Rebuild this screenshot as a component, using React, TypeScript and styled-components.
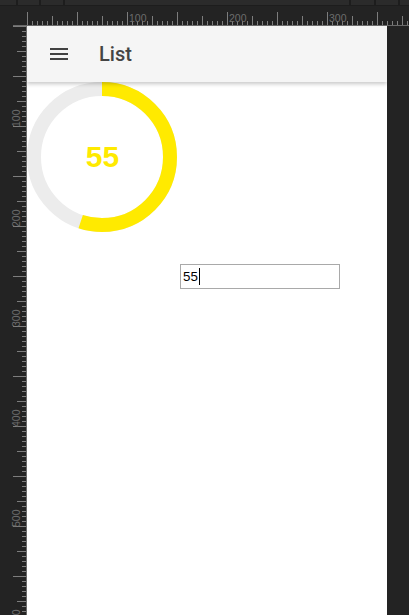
import React from "react";
import styled, { createGlobalStyle } from "styled-components";

const GlobalStyle = createGlobalStyle`
  html, body { margin: 0; padding: 0; background: #232323; overflow: hidden; }
  body { font-family: "Liberation Sans", Arial, sans-serif; }
`;

const Frame = styled.div`
  display: grid;
  grid-template-columns: 27px 360px 22px;
  grid-template-rows: 6px 20px 589px;
  width: 409px;
  height: 615px;
  background: #232323;
  overflow: hidden;
`;

const TopStrip = styled.div`
  grid-column: 1 / -1;
  display: flex;
  gap: 2px;
  background: #1d1d1d;
  padding-bottom: 1px;
`;

const StripSegment = styled.div<{ $w: number }>`
  flex: 0 0 ${(p) => p.$w}px;
  background: #2b2b2b;
`;

const TopRulerBox = styled.div`
  grid-column: 1 / -1;
  display: block;
  line-height: 0;
`;

const LeftRulerBox = styled.div`
  line-height: 0;
`;

const RightGutter = styled.div`
  background: #232323;
`;

const Page = styled.div`
  display: flex;
  flex-direction: column;
  background: #ffffff;
  overflow: hidden;
`;

const AppBar = styled.header`
  flex: 0 0 56px;
  display: flex;
  align-items: center;
  gap: 28px;
  padding-left: 20px;
  background: #f5f5f5;
  box-shadow: 0 2px 4px rgba(0, 0, 0, 0.22);
  position: relative;
  z-index: 1;
`;

const MenuIcon = styled.svg`
  width: 24px;
  height: 24px;
  fill: #424242;
  display: block;
`;

const Title = styled.h1`
  margin: 0;
  font-family: Roboto, "Liberation Sans", sans-serif;
  font-size: 20px;
  font-weight: 500;
  color: #444444;
  line-height: 24px;
`;

const Content = styled.main`
  display: flex;
  align-items: flex-start;
  gap: 3px;
`;

const ChartSvg = styled.svg`
  display: block;
  width: 150px;
  height: 150px;
  flex: 0 0 150px;
`;

const InputWrap = styled.div`
  position: relative;
  margin-top: 182px;
  width: 160px;
  height: 25px;
`;

const ValueInput = styled.input`
  box-sizing: border-box;
  display: block;
  width: 160px;
  height: 25px;
  margin: 0;
  padding: 1px 2px;
  border: 1px solid #a9a9a9;
  border-radius: 0;
  font-family: "Liberation Sans", Arial, sans-serif;
  font-size: 13.33px;
  color: #000;
  caret-color: transparent;
  outline: none;
  background: #fff;
`;

const Caret = styled.span`
  position: absolute;
  left: 18px;
  top: 4px;
  width: 1px;
  height: 17px;
  background: #000;
  pointer-events: none;
`;

const TICK = "#7d7d7d";
const LABEL = "#6c6c6c";

function TopRuler() {
  const ticks: React.ReactNode[] = [];
  const labels: React.ReactNode[] = [];
  for (let v = 0; 27 + v < 409; v += 5) {
    const x = 27 + v;
    const len = v % 50 === 0 ? 13 : v % 25 === 0 ? 9 : 4;
    ticks.push(<rect key={v} x={x} y={19 - len} width={1} height={len} fill={TICK} />);
    if (v % 100 === 0 && v > 0) {
      labels.push(
        <text key={"l" + v} x={x + 2} y={16} fontSize={10.5} fill={LABEL} fontFamily="Liberation Sans, Arial, sans-serif">
          {v}
        </text>
      );
    }
  }
  return (
    <svg width={409} height={20} viewBox="0 0 409 20">
      <rect x={13} y={19} width={396} height={1} fill="#6a6a6a" />
      {ticks}
      {labels}
    </svg>
  );
}

function LeftRuler() {
  const ticks: React.ReactNode[] = [];
  const labels: React.ReactNode[] = [];
  for (let v = 0; v < 600; v += 5) {
    const len = v % 50 === 0 ? 13 : v % 25 === 0 ? 9 : 4;
    ticks.push(<rect key={v} x={26 - len} y={v} width={len} height={1} fill={TICK} />);
  }
  for (let v = 100; v <= 600; v += 100) {
    labels.push(
      <text
        key={"l" + v}
        transform={`translate(20 ${v + 1}) rotate(-90)`}
        fontSize={10.5}
        fill={LABEL}
        fontFamily="Liberation Sans, Arial, sans-serif"
      >
        {v}
      </text>
    );
  }
  return (
    <svg width={27} height={589} viewBox="0 0 27 589">
      <rect x={26} y={0} width={1} height={589} fill="#6a6a6a" />
      {ticks}
      {labels}
    </svg>
  );
}

function Donut({ value }: { value: number }) {
  const r = 68;
  const c = 2 * Math.PI * r;
  const filled = (value / 100) * c;
  return (
    <ChartSvg viewBox="0 0 150 150">
      <circle cx={75} cy={75} r={r} fill="none" stroke="#ececec" strokeWidth={14} />
      <circle
        cx={75}
        cy={75}
        r={r}
        fill="none"
        stroke="#ffea00"
        strokeWidth={14}
        strokeDasharray={`${filled} ${c}`}
        transform="rotate(-90 75 75)"
      />
      <text
        x={75.5}
        y={85}
        textAnchor="middle"
        fontSize={30}
        fontWeight={700}
        fill="#ffea00"
        fontFamily="Liberation Sans, Arial, sans-serif"
      >
        {value}
      </text>
    </ChartSvg>
  );
}

export default function App() {
  const [value, setValue] = React.useState("55");
  const num = Math.max(0, Math.min(100, Number(value) || 0));
  return (
    <>
      <GlobalStyle />
      <Frame>
        <TopStrip>
          {[16, 21, 22, 284, 23, 22, 9].map((w, i) => (
            <StripSegment key={i} $w={w} />
          ))}
        </TopStrip>
        <TopRulerBox>
          <TopRuler />
        </TopRulerBox>
        <LeftRulerBox>
          <LeftRuler />
        </LeftRulerBox>
        <Page>
          <AppBar>
            <MenuIcon viewBox="0 0 24 24" aria-label="menu">
              <path d="M3 18h18v-2H3v2zm0-5h18v-2H3v2zm0-7v2h18V6H3z" />
            </MenuIcon>
            <Title>List</Title>
          </AppBar>
          <Content>
            <Donut value={num} />
            <InputWrap>
              <ValueInput value={value} onChange={(e) => setValue(e.target.value)} />
              <Caret style={{ left: 4 + value.length * 7.4 }} />
            </InputWrap>
          </Content>
        </Page>
        <RightGutter />
      </Frame>
    </>
  );
}
